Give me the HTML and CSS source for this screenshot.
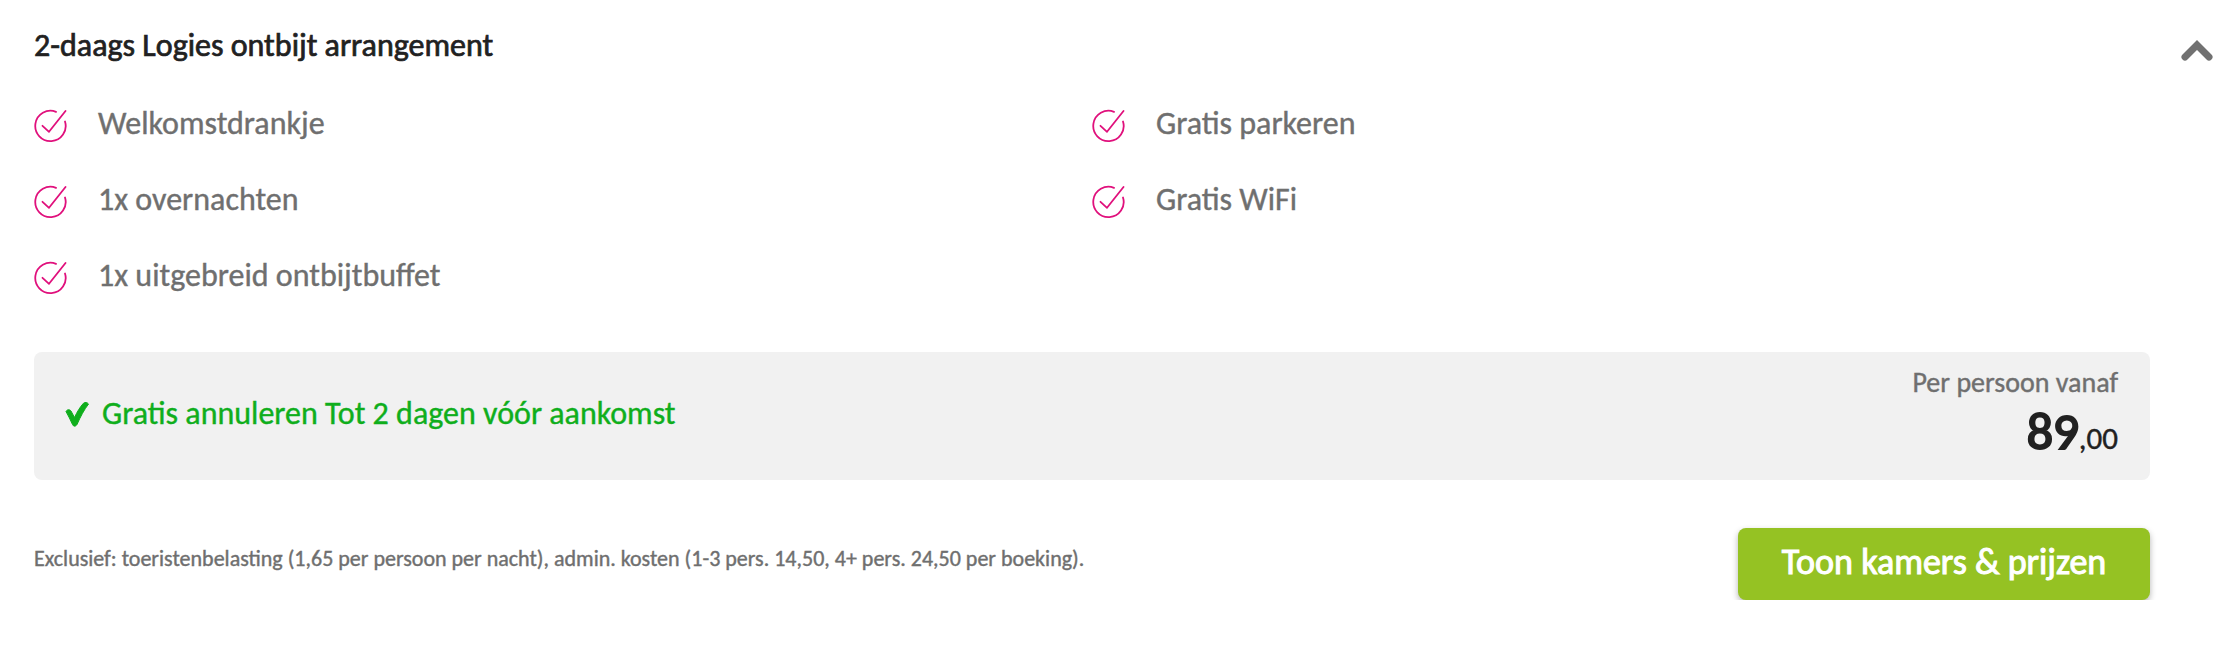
FILE: index.html
```
<!DOCTYPE html>
<html lang="nl">
<head>
<meta charset="utf-8">
<title>Arrangement</title>
<link rel="stylesheet" href="styles.css">
</head>
<body>
<svg class="sprite" aria-hidden="true">
  <symbol id="circle-check" viewBox="0 0 34 34">
    <path d="M22 2.800A15.200 15.200 0 1 0 31 12.500M8.500 16.800l6.500 6L31.500 2" fill="none" stroke="currentColor" stroke-width="1.8" stroke-linecap="round" stroke-linejoin="round"/>
  </symbol>
</svg>
<main class="card">
  <header class="head">
    <h2 class="title"><span>2-daags Logies ontbijt arrangement</span></h2>
    <svg class="chevron" viewBox="0 0 34 24"><path d="M5 19 17 7l12 12" fill="none" stroke="currentColor" stroke-width="7" stroke-linecap="round" stroke-linejoin="miter"/></svg>
  </header>
  <div class="features">
    <ul class="list">
      <li class="item"><svg class="tick"><use href="#circle-check"/></svg><span>Welkomstdrankje</span></li>
      <li class="item"><svg class="tick"><use href="#circle-check"/></svg><span>1x overnachten</span></li>
      <li class="item"><svg class="tick"><use href="#circle-check"/></svg><span>1x uitgebreid ontbijtbuffet</span></li>
    </ul>
    <ul class="list">
      <li class="item"><svg class="tick"><use href="#circle-check"/></svg><span>Gratis parkeren</span></li>
      <li class="item"><svg class="tick"><use href="#circle-check"/></svg><span>Gratis WiFi</span></li>
    </ul>
  </div>
  <section class="summary">
    <p class="cancel"><svg class="heavy" viewBox="0 0 24 26"><path d="M1 10.500C2 8.500 4.500 8 6 10L9.500 16.500C12 11 15 6 18.500 2.200C20 .8 22.500 1.500 23.500 3C19 9 15.500 15.500 12 23.500C10.500 25.800 8.500 25.600 7.500 23.500C5.500 19 3.500 15 1 10.500Z" fill="currentColor" stroke="currentColor" stroke-width="1"/></svg><span>Gratis annuleren Tot 2 dagen vóór aankomst</span></p>
    <div class="price">
      <p class="label">Per persoon vanaf</p>
      <p class="amount"><strong>89</strong><span class="cents">,00</span></p>
    </div>
  </section>
  <footer class="foot">
    <p class="note">Exclusief: toeristenbelasting (1,65 per persoon per nacht), admin. kosten (1-3 pers. 14,50, 4+ pers. 24,50 per boeking).</p>
    <button class="cta">Toon kamers &amp; prijzen</button>
  </footer>
</main>
</body>
</html>
```
FILE: styles.css
```
* { box-sizing: border-box; margin: 0; padding: 0; }
body { background: #fff; color: #6f6f6f; font-family: Carlito, Calibri, "Open Sans", sans-serif; font-size: 32px; line-height: 40px; -webkit-text-stroke: .4px currentColor; }
.sprite { position: absolute; width: 0; height: 0; }
.card { padding: 25px 86px 0 34px; }
.head { display: flex; justify-content: space-between; margin-right: -64px; height: 60px; }
.title { padding-top: 1px; font-size: 32px; line-height: 40px; font-weight: 400; color: #212121; -webkit-text-stroke: .7px #212121; }
.chevron { width: 34px; height: 24px; margin-top: 13px; color: #717171; }
.features { display: grid; grid-template-columns: 1fr 1fr; height: 267px; padding-top: 1px; }
.list { list-style: none; }
.item { display: flex; align-items: center; height: 76px; gap: 30px; }
.item span { padding-bottom: 0; }
.tick { width: 34px; height: 34px; color: #e0107c; margin-top: 3px; }
.summary { display: flex; justify-content: space-between; height: 128px; padding: 12px 32px 0 31px; border-radius: 8px; background: #f1f1f1; }
.cancel { display: flex; align-items: center; gap: 13px; height: 100px; color: #0fae1c; }
.heavy { width: 24px; height: 26px; }
.price { text-align: right; }
.label { font-size: 28px; line-height: 38px; }
.amount { color: #212121; line-height: 58px; }
.amount strong { font-size: 52px; font-weight: 400; letter-spacing: -.3px; -webkit-text-stroke: 2px #212121; }
.cents { font-size: 31px; }
.foot { display: flex; justify-content: space-between; padding-top: 48px; }
.note { font-size: 22px; line-height: 62px; }
.cta { width: 412px; height: 72px; padding-bottom: 4px; border: 0; border-radius: 8px; background: #95c223; color: #fff; font: 36px Carlito, Calibri, "Open Sans", sans-serif; box-shadow: 0 3px 6px rgba(0,0,0,.3); -webkit-text-stroke: 1px #fff; }
```
